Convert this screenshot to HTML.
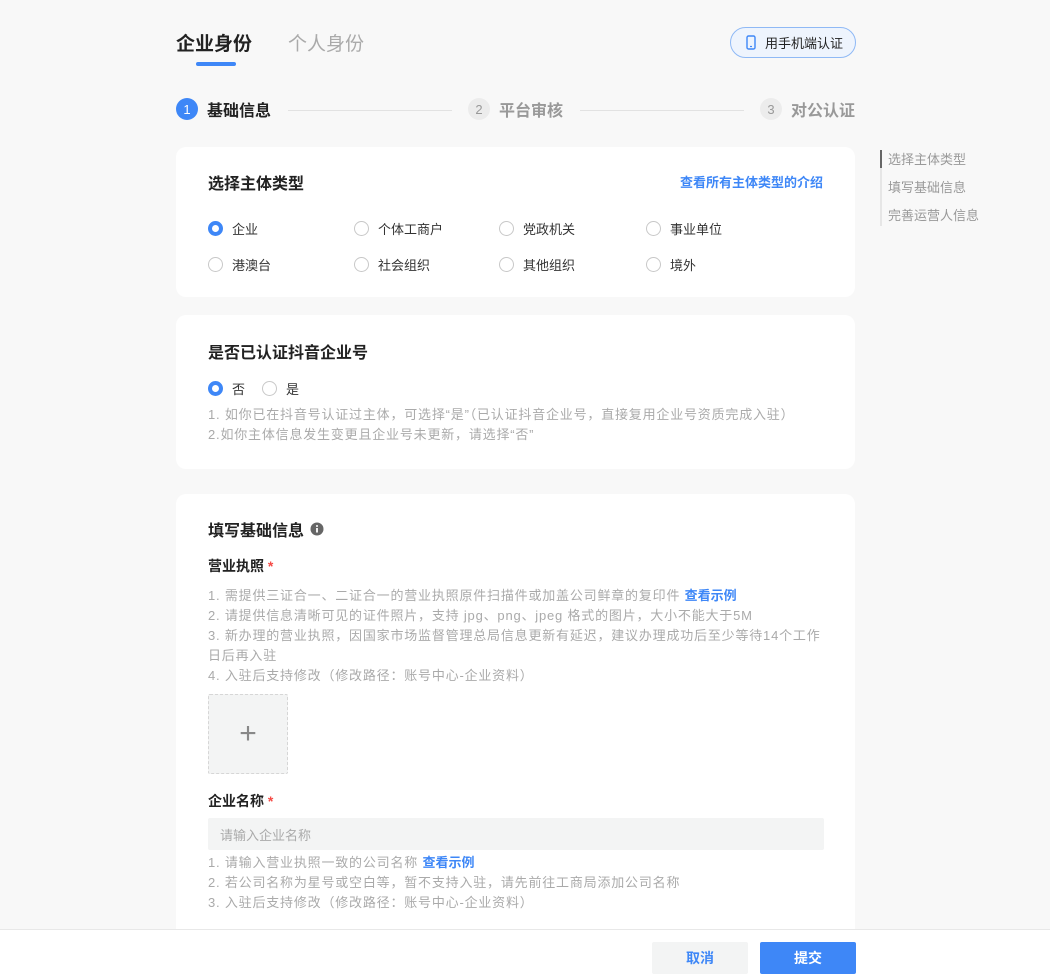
<!DOCTYPE html>
<html><head><meta charset="utf-8"><style>
*{box-sizing:border-box;margin:0;padding:0}
html,body{width:1050px;height:978px;overflow:hidden}
body{background:#f8f8f8;font-family:"Liberation Sans","Noto Sans CJK SC",sans-serif;color:#222;position:relative}
.abs{position:absolute}
.card{position:absolute;left:176px;width:679px;background:#fff;border-radius:10px}
.h{font-size:16px;font-weight:bold;color:#222}
.radio{position:absolute;font-size:13px;color:#333;display:flex;align-items:center}
.radio i{display:inline-block;width:15px;height:15px;border:1px solid #c8c8c8;border-radius:50%;margin-right:9px;background:#fff}
.radio i.on{border:4.5px solid #3e87f7}
.tip{font-size:13px;color:#aaa;line-height:20px;letter-spacing:0.8px}
.tip b{color:#3e87f7;letter-spacing:0}
.step{position:absolute;top:97px;display:flex;align-items:center;font-size:16px;font-weight:bold}
.step span.n{width:22px;height:22px;border-radius:50%;display:inline-flex;align-items:center;justify-content:center;font-size:13px;font-weight:normal;margin-right:9px}
</style></head><body>
<div class="abs" style="left:176px;top:29px;font-size:19px;font-weight:bold;color:#222">企业身份</div>
<div class="abs" style="left:196px;top:62px;width:40px;height:4px;border-radius:2px;background:#3e87f7"></div>
<div class="abs" style="left:288px;top:29px;font-size:19px;color:#aaa">个人身份</div>
<div class="abs" style="left:730px;top:27px;width:126px;height:31px;border:1px solid #8fb9f5;border-radius:16px;background:#eef4fd;font-size:13px;color:#222;display:flex;align-items:center;padding-left:14px">
<svg width="12" height="15" viewBox="0 0 12 15" style="margin-right:8px"><rect x="2" y="1" width="8" height="13" rx="1.5" fill="none" stroke="#3e87f7" stroke-width="1.4"/><line x1="5" y1="11.5" x2="7" y2="11.5" stroke="#3e87f7" stroke-width="1.2"/></svg>用手机端认证</div>

<div class="step" style="left:176px"><span class="n" style="background:#3e87f7;color:#fff">1</span>基础信息</div>
<div class="abs" style="left:288px;top:110px;width:164px;height:1px;background:#e2e2e2"></div>
<div class="step" style="left:468px;color:#999"><span class="n" style="background:#ececec;color:#999">2</span>平台审核</div>
<div class="abs" style="left:580px;top:110px;width:164px;height:1px;background:#e2e2e2"></div>
<div class="step" style="left:760px;color:#999"><span class="n" style="background:#ececec;color:#999">3</span>对公认证</div>

<div class="abs" style="left:880px;top:150px;width:2px;height:76px;background:#e6e6e6"></div>
<div class="abs" style="left:880px;top:150px;width:2px;height:18px;background:#666"></div>
<div class="abs" style="left:888px;top:146px;font-size:13px;color:#999;line-height:28px">选择主体类型<br>填写基础信息<br>完善运营人信息</div>

<div class="card" style="top:147px;height:150px">
<div class="h abs" style="left:32px;top:23px">选择主体类型</div>
<div class="abs" style="right:32px;top:25px;font-size:13px;font-weight:bold;color:#3e87f7">查看所有主体类型的介绍</div>
<div class="radio" style="left:32px;top:72px"><i class="on"></i>企业</div>
<div class="radio" style="left:178px;top:72px"><i></i>个体工商户</div>
<div class="radio" style="left:323px;top:72px"><i></i>党政机关</div>
<div class="radio" style="left:470px;top:72px"><i></i>事业单位</div>
<div class="radio" style="left:32px;top:108px"><i></i>港澳台</div>
<div class="radio" style="left:178px;top:108px"><i></i>社会组织</div>
<div class="radio" style="left:323px;top:108px"><i></i>其他组织</div>
<div class="radio" style="left:470px;top:108px"><i></i>境外</div>
</div>

<div class="card" style="top:315px;height:154px">
<div class="h abs" style="left:32px;top:24px">是否已认证抖音企业号</div>
<div class="radio" style="left:32px;top:64px"><i class="on"></i>否</div>
<div class="radio" style="left:86px;top:64px"><i></i>是</div>
<div class="tip abs" style="left:32px;top:90px">1. 如你已在抖音号认证过主体，可选择“是”（已认证抖音企业号，直接复用企业号资质完成入驻）<br>2.如你主体信息发生变更且企业号未更新，请选择“否”</div>
</div>

<div class="card" style="top:494px;height:484px;border-radius:10px 10px 0 0">
<div class="h abs" style="left:32px;top:23px;display:flex;align-items:center">填写基础信息<svg width="14" height="14" viewBox="0 0 14 14" style="margin-left:6px"><circle cx="7" cy="7" r="6.5" fill="#666"/><rect x="6.1" y="6" width="1.8" height="4.5" fill="#fff"/><circle cx="7" cy="4" r="1" fill="#fff"/></svg></div>
<div class="abs" style="left:32px;top:62px;font-size:14px;font-weight:bold">营业执照 <span style="color:#f54a45">*</span></div>
<div class="tip abs" style="left:32px;top:92px;width:624px">1. 需提供三证合一、二证合一的营业执照原件扫描件或加盖公司鲜章的复印件 <b>查看示例</b><br>2. 请提供信息清晰可见的证件照片，支持 jpg、png、jpeg 格式的图片，大小不能大于5M<br>3. 新办理的营业执照，因国家市场监督管理总局信息更新有延迟，建议办理成功后至少等待14个工作日后再入驻<br>4. 入驻后支持修改（修改路径：账号中心-企业资料）</div>
<div class="abs" style="left:32px;top:200px;width:80px;height:80px;border:1px dashed #d6d6d6;background:#f3f4f4;border-radius:2px;color:#888;font-size:30px;font-weight:300;display:flex;align-items:center;justify-content:center">+</div>
<div class="abs" style="left:32px;top:297px;font-size:14px;font-weight:bold">企业名称 <span style="color:#f54a45">*</span></div>
<div class="abs" style="left:32px;top:324px;width:616px;height:32px;background:#f3f4f4;border-radius:2px;font-size:13px;color:#aaa;padding:7px 12px">请输入企业名称</div>
<div class="tip abs" style="left:32px;top:359px">1. 请输入营业执照一致的公司名称 <b>查看示例</b><br>2. 若公司名称为星号或空白等，暂不支持入驻，请先前往工商局添加公司名称<br>3. 入驻后支持修改（修改路径：账号中心-企业资料）</div>
</div>

<div class="abs" style="left:0;top:929px;width:1050px;height:49px;background:#fff;border-top:1px solid #e8e8e8"></div>
<div class="abs" style="left:652px;top:942px;width:96px;height:32px;background:#f3f4f4;border-radius:2px;font-size:14px;font-weight:bold;color:#3e87f7;display:flex;align-items:center;justify-content:center">取消</div>
<div class="abs" style="left:760px;top:942px;width:96px;height:32px;background:#3e87f7;border-radius:2px;font-size:14px;font-weight:bold;color:#fff;display:flex;align-items:center;justify-content:center">提交</div>
</body></html>
